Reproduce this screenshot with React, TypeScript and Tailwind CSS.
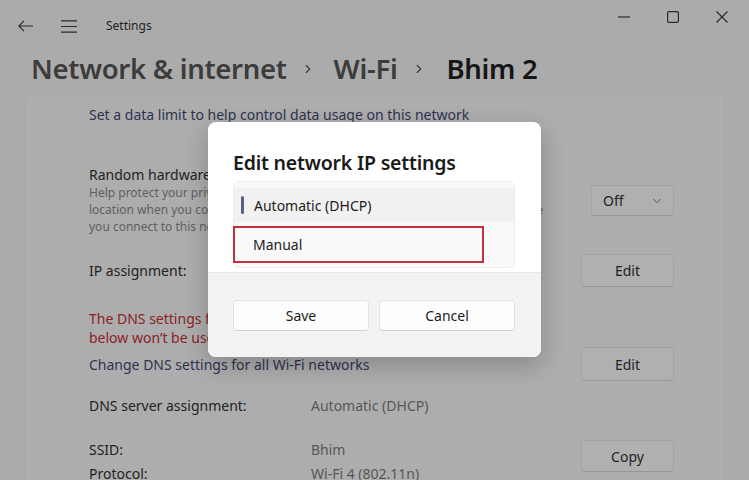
import { ChevronDown, ChevronRight } from "lucide-react";

const font = "font-['Segoe_UI','Noto_Sans',sans-serif]";

function CaptionIcons() {
  return (
    <div className="flex items-start pt-[11px] text-[#2b2b2b]">
      <div className="flex w-[49px] justify-center pt-[5px]">
        <svg width="12" height="2" viewBox="0 0 12 2">
          <path d="M0 1h12" stroke="currentColor" strokeWidth="1.2" />
        </svg>
      </div>
      <div className="flex w-[49px] justify-center">
        <svg width="12" height="12" viewBox="0 0 12 12">
          <rect x="0.6" y="0.6" width="10.8" height="10.8" rx="1.2" fill="none" stroke="currentColor" strokeWidth="1.2" />
        </svg>
      </div>
      <div className="flex w-[49px] justify-center">
        <svg width="12" height="12" viewBox="0 0 12 12">
          <path d="M0.5 0.5l11 11M11.5 0.5l-11 11" stroke="currentColor" strokeWidth="1.2" />
        </svg>
      </div>
    </div>
  );
}

function GrayButton({ label, w = "w-[93px]", h = "h-[33px]" }: { label: string; w?: string; h?: string }) {
  return (
    <button
      className={`${w} ${h} rounded-[4px] border border-[#a3a3a3] border-b-[#969696] bg-[#b0b0b0] text-[14px] text-[#1f1f1f]`}
    >
      {label}
    </button>
  );
}

function DialogButton({ label }: { label: string }) {
  return (
    <button className="h-[31px] w-[136px] rounded-[4px] border border-[#e3e3e3] border-b-[#d2d2d2] bg-[#fdfdfd] text-[14px] text-[#1b1b1b]">
      {label}
    </button>
  );
}

export default function App() {
  return (
    <div className={`relative h-[480px] w-[749px] overflow-hidden bg-[#ababab] ${font}`}>
      {/* title bar */}
      <div className="flex h-[50px] items-start">
        <div className="flex h-[52px] items-center pl-[18px] text-[#2b2b2b]">
          <svg width="15" height="12" viewBox="0 0 15 12">
            <path d="M15 6H1.2M6 0.8L0.9 6 6 11.2" fill="none" stroke="currentColor" strokeWidth="1.2" />
          </svg>
          <svg className="ml-[28px]" width="16" height="13" viewBox="0 0 16 13">
            <path d="M0 0.8h16M0 6.5h16M0 12.2h16" stroke="currentColor" strokeWidth="1.2" />
          </svg>
          <span className="ml-[29px] text-[12px] text-[#1f1f1f]">Settings</span>
        </div>
        <div className="ml-auto pr-[3px]">
          <CaptionIcons />
        </div>
      </div>

      {/* breadcrumb */}
      <div className="flex h-[38px] items-center pl-[31px] text-[27.5px] font-semibold tracking-[-0.3px]">
        <span className="text-[#3c3c3c]">Network &amp; internet</span>
        <ChevronRight className="ml-[14px] mr-[19px] h-[14px] w-[14px] text-[#3c3c3c]" strokeWidth={2} />
        <span className="text-[#3c3c3c]">Wi-Fi</span>
        <ChevronRight className="ml-[15px] mr-[20px] h-[14px] w-[14px] text-[#3c3c3c]" strokeWidth={2} />
        <span className="text-[#161616]">Bhim 2</span>
      </div>

      {/* settings card */}
      <div className="ml-[28px] mt-[9px] h-[400px] w-[694px] rounded-t-[6px] border border-b-0 border-[#b3b3b3] bg-[#adadad] pl-[60px] pr-[47px] text-[14px] text-[#222222]">
        <div className="flex h-[32px] items-center text-[#2f3350]">
          Set a data limit to help control data usage on this network
        </div>

        <div className="mt-[36px] flex items-center">
          <div className="flex-1">
            <div className="leading-[18px]">Random hardware addresses</div>
            <div className="text-[12px] leading-[17px] text-[#5f5f5f]">
              Help protect your privacy by making it harder for people to track
              <br />
              location when you connect to this network. The setting takes effect the next time
              <br />
              you connect to this network.
            </div>
          </div>
          <div className="flex h-[31px] w-[83px] items-center justify-between rounded-[4px] border border-[#a3a3a3] border-b-[#969696] bg-[#b0b0b0] pl-[11px] pr-[9px]">
            <span>Off</span>
            <ChevronDown className="h-[14px] w-[14px] text-[#4a4a4a]" strokeWidth={1.5} />
          </div>
        </div>

        <div className="mt-[19px] flex h-[33px] items-center justify-between">
          <span>IP assignment:</span>
          <GrayButton label="Edit" />
        </div>

        <div className="mt-[22px] leading-[19px] text-[#8a2326]">
          The DNS settings for this network are overridden, so the
          <br />
          below won&rsquo;t be used
        </div>
        <div className="flex h-[34px] items-center justify-between">
          <span className="text-[#2f3350]">Change DNS settings for all Wi-Fi networks</span>
          <GrayButton label="Edit" h="h-[34px]" />
        </div>

        <div className="mt-[14px] flex h-[20px] items-center">
          <span className="w-[222px]">DNS server assignment:</span>
          <span className="text-[#575757]">Automatic (DHCP)</span>
        </div>

        <div className="mt-[23px] flex items-start">
          <div className="flex-1 leading-[24px]">
            <div className="flex">
              <span className="w-[222px]">SSID:</span>
              <span className="text-[#575757]">Bhim</span>
            </div>
            <div className="flex">
              <span className="w-[222px]">Protocol:</span>
              <span className="text-[#575757]">Wi-Fi 4 (802.11n)</span>
            </div>
          </div>
          <div className="mt-[2px]">
            <GrayButton label="Copy" h="h-[32px]" />
          </div>
        </div>
      </div>

      {/* modal dialog */}
      <div className="absolute left-[208px] top-[122px] flex h-[235px] w-[333px] flex-col overflow-hidden rounded-[8px] bg-white shadow-[0_8px_24px_rgba(0,0,0,0.22)]">
        <div className="flex-1 px-[25px]">
          <div className="flex h-[59px] items-center pt-[22px] text-[19.5px] font-semibold tracking-[-0.2px] text-[#1a1a1a]">
            Edit network IP settings
          </div>
          <div className="h-[87px] w-[282px] rounded-[6px] border border-[#ededed] bg-[#f9f9f9] pt-[6px] text-[14px] text-[#1b1b1b]">
            <div className="flex h-[34px] items-center bg-[#f1f1f1]">
              <div className="ml-[7px] h-[18px] w-[3px] rounded-full bg-[#5b5f85]" />
              <span className="ml-[10px]">Automatic (DHCP)</span>
            </div>
            <div className="mt-[4px] flex h-[37px] w-[251px] -ml-px items-center border-2 border-[#c23039] pl-[18px]">
              Manual
            </div>
          </div>
        </div>
        <div className="flex h-[85px] gap-[10px] border-t border-[#e8e8e8] bg-[#f3f3f3] px-[25px] pt-[27px]">
          <DialogButton label="Save" />
          <DialogButton label="Cancel" />
        </div>
      </div>
    </div>
  );
}
